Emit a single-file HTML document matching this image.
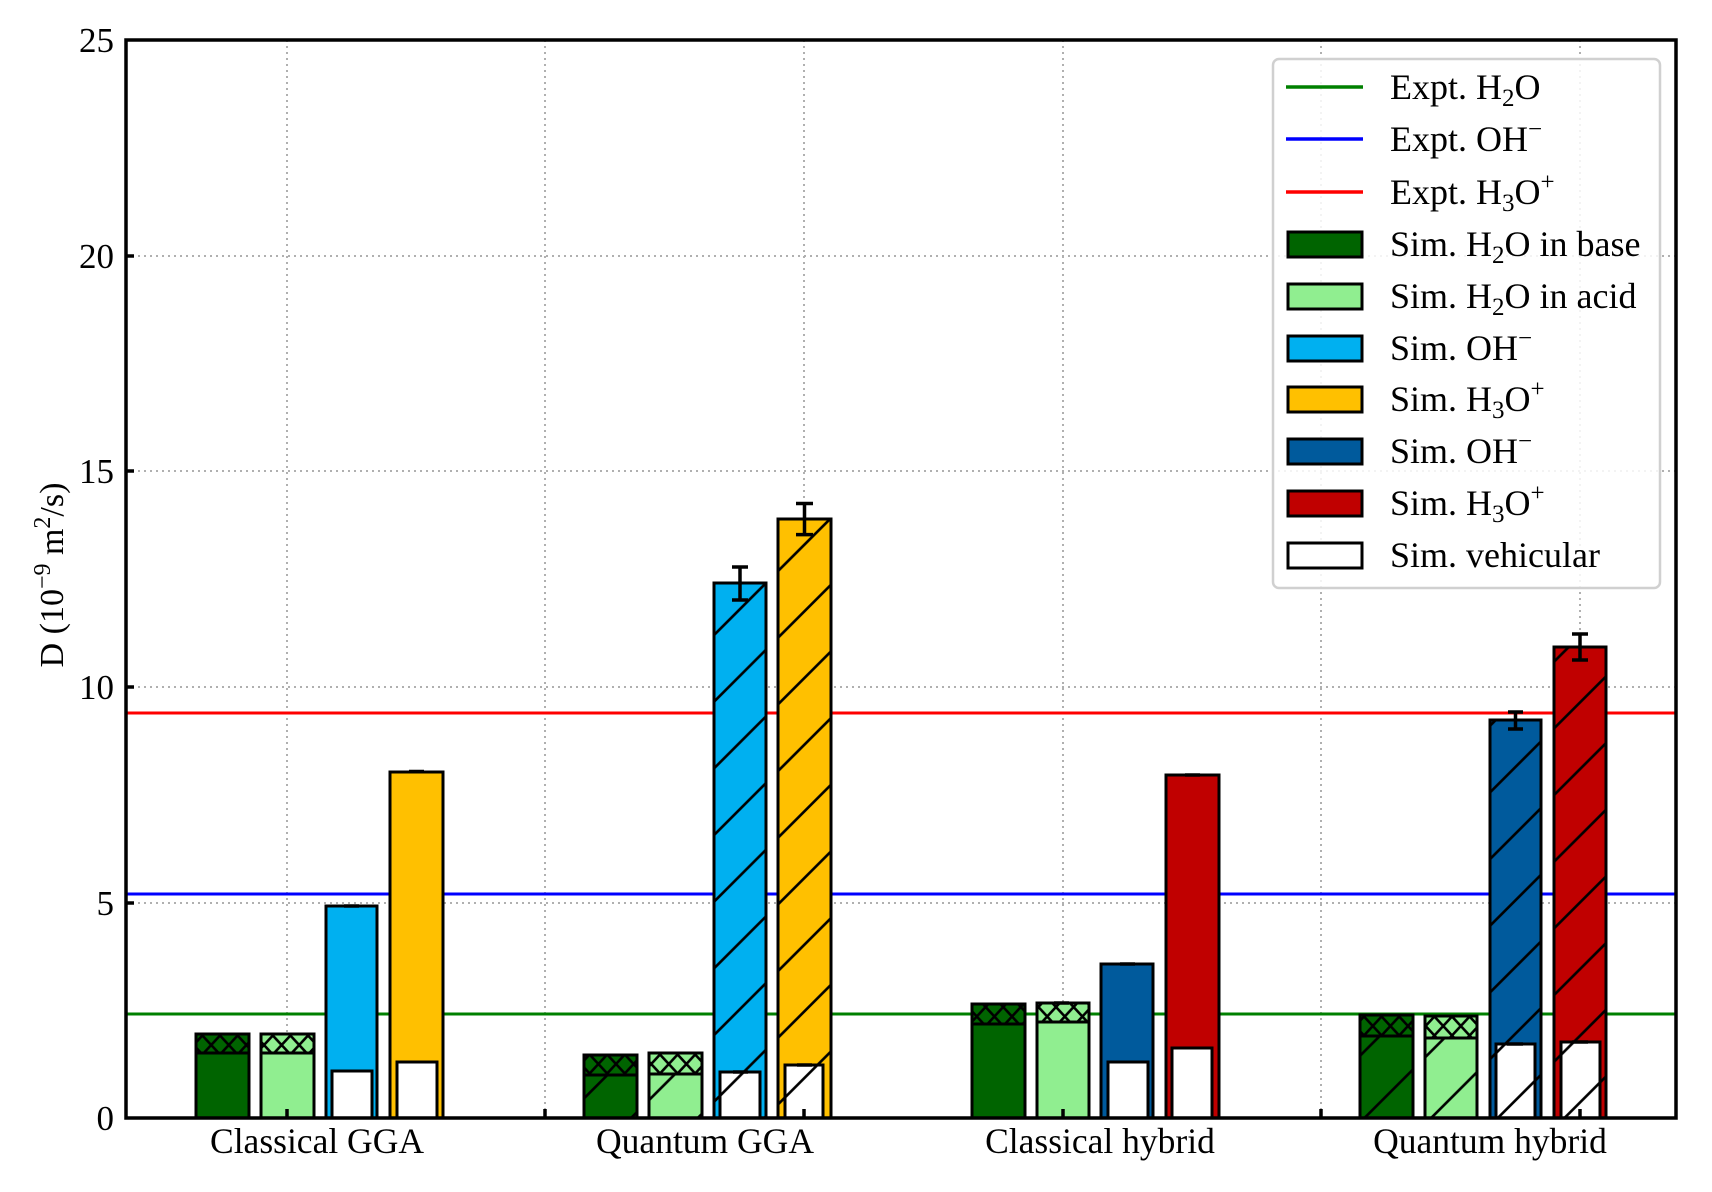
<!DOCTYPE html>
<html><head><meta charset="utf-8"><style>
html,body{margin:0;padding:0;background:#fff}
svg{display:block}
text{font-family:"Liberation Serif",serif;fill:#000}
</style></head><body>
<svg width="1712" height="1192" viewBox="0 0 1712 1192" xmlns="http://www.w3.org/2000/svg">
<defs>
<pattern id="hs" patternUnits="userSpaceOnUse" width="66.67" height="66.67">
<path d="M-2,17.67 L17.67,-2 M-2,84.33 L84.33,-2" stroke="#000" stroke-width="2.6"/>
</pattern>
<pattern id="hx" patternUnits="userSpaceOnUse" x="0" y="0" width="17.6" height="19">
<path d="M0,0 L17.6,19 M17.6,0 L0,19" stroke="#000" stroke-width="2.6"/>
</pattern>
</defs>
<rect width="1712" height="1192" fill="#fff"/>
<g stroke="#b0b0b0" stroke-width="2" stroke-dasharray="2,4">
<line x1="126" x2="1676" y1="903" y2="903"/>
<line x1="126" x2="1676" y1="687" y2="687"/>
<line x1="126" x2="1676" y1="471" y2="471"/>
<line x1="126" x2="1676" y1="256" y2="256"/>
<line x1="287" x2="287" y1="40" y2="1118"/>
<line x1="545" x2="545" y1="40" y2="1118"/>
<line x1="804" x2="804" y1="40" y2="1118"/>
<line x1="1063" x2="1063" y1="40" y2="1118"/>
<line x1="1321" x2="1321" y1="40" y2="1118"/>
<line x1="1580" x2="1580" y1="40" y2="1118"/>
</g>
<line x1="126" x2="1676" y1="1014" y2="1014" stroke="#008000" stroke-width="3"/>
<line x1="126" x2="1676" y1="894" y2="894" stroke="#0000ff" stroke-width="3"/>
<line x1="126" x2="1676" y1="713" y2="713" stroke="#ff0000" stroke-width="3"/>

<g stroke="#000" stroke-width="3">
<rect x="196" y="1034" width="53" height="84" fill="#006400"/>
<rect x="196" y="1034" width="53" height="19" fill="url(#hx)"/>
<line x1="196" x2="249" y1="1053" y2="1053"/>
<rect x="261" y="1034" width="53" height="84" fill="#90ee90"/>
<rect x="261" y="1034" width="53" height="19" fill="url(#hx)"/>
<line x1="261" x2="314" y1="1053" y2="1053"/>
<rect x="326" y="906" width="51" height="212" fill="#00b0f0"/>
<rect x="332" y="1071" width="40" height="47" fill="#fff"/>
<rect x="390" y="772" width="53" height="346" fill="#ffc000"/>
<rect x="397" y="1062" width="40" height="56" fill="#fff"/>
<rect x="584" y="1055" width="53" height="63" fill="#006400"/>
<rect x="584" y="1075" width="53" height="43" fill="url(#hs)" stroke="none"/>
<rect x="584" y="1055" width="53" height="20" fill="url(#hx)"/>
<rect x="584" y="1055" width="53" height="63" fill="none"/>
<rect x="649" y="1053" width="53" height="65" fill="#90ee90"/>
<rect x="649" y="1074" width="53" height="44" fill="url(#hs)" stroke="none"/>
<rect x="649" y="1053" width="53" height="21" fill="url(#hx)"/>
<rect x="649" y="1053" width="53" height="65" fill="none"/>
<rect x="714" y="583" width="52" height="535" fill="#00b0f0"/>
<rect x="714" y="583" width="52" height="535" fill="url(#hs)"/>
<rect x="720" y="1072" width="40" height="46" fill="#fff"/>
<rect x="720" y="1072" width="40" height="46" fill="url(#hs)"/>
<rect x="778" y="519" width="53" height="599" fill="#ffc000"/>
<rect x="778" y="519" width="53" height="599" fill="url(#hs)"/>
<rect x="785" y="1065" width="38" height="53" fill="#fff"/>
<rect x="785" y="1065" width="38" height="53" fill="url(#hs)"/>
<rect x="972" y="1004" width="53" height="114" fill="#006400"/>
<rect x="972" y="1004" width="53" height="20" fill="url(#hx)"/>
<rect x="1037" y="1003" width="52" height="115" fill="#90ee90"/>
<rect x="1037" y="1003" width="52" height="19" fill="url(#hx)"/>
<rect x="1101" y="964" width="52" height="154" fill="#005a9c"/>
<rect x="1108" y="1062" width="40" height="56" fill="#fff"/>
<rect x="1166" y="775" width="53" height="343" fill="#c00000"/>
<rect x="1172" y="1048" width="40" height="70" fill="#fff"/>
<rect x="1360" y="1015" width="53" height="103" fill="#006400"/>
<rect x="1360" y="1036" width="53" height="82" fill="url(#hs)" stroke="none"/>
<rect x="1360" y="1015" width="53" height="21" fill="url(#hx)"/>
<rect x="1360" y="1015" width="53" height="103" fill="none"/>
<rect x="1425" y="1016" width="52" height="102" fill="#90ee90"/>
<rect x="1425" y="1038" width="52" height="80" fill="url(#hs)" stroke="none"/>
<rect x="1425" y="1016" width="52" height="22" fill="url(#hx)"/>
<rect x="1425" y="1016" width="52" height="102" fill="none"/>
<rect x="1490" y="720" width="51" height="398" fill="#005a9c"/>
<rect x="1490" y="720" width="51" height="398" fill="url(#hs)"/>
<rect x="1496" y="1044" width="39" height="74" fill="#fff"/>
<rect x="1496" y="1044" width="39" height="74" fill="url(#hs)"/>
<rect x="1554" y="647" width="52" height="471" fill="#c00000"/>
<rect x="1554" y="647" width="52" height="471" fill="url(#hs)"/>
<rect x="1561" y="1042" width="39" height="76" fill="#fff"/>
<rect x="1561" y="1042" width="39" height="76" fill="url(#hs)"/>
</g>
<g stroke="#000" stroke-width="3.5">
<path d="M740,567V600M732,567H748M732,600H748"/>
<path d="M804.5,503.5V534.6M796,503.5H813M796,534.6H813"/>
<path d="M1515.5,712V729M1508,712H1523M1508,729H1523"/>
<path d="M1580,634V660M1572,634H1588M1572,660H1588"/>
<path d="M344,906H359M409,771.5H424M1120,964H1135M1185,775H1200"/>
<path d="M733,1072H748M797,1065H812M1507,1044H1523M1572,1042H1588M1054,1003H1069"/>
</g>
<rect x="126" y="40" width="1550" height="1078" fill="none" stroke="#000" stroke-width="3.5"/>
<g stroke="#000" stroke-width="3.5">
<path d="M126,903h8M126,687h8M126,471h8M126,256h8"/>
<path d="M287,1118v-9M545,1118v-9M804,1118v-9M1063,1118v-9M1321,1118v-9M1580,1118v-9"/>
</g>
<g font-size="35" text-anchor="end">
<text x="114" y="52">25</text>
<text x="114" y="268">20</text>
<text x="114" y="483">15</text>
<text x="114" y="699">10</text>
<text x="114" y="915">5</text>
<text x="114" y="1130">0</text>
</g>
<g font-size="35.5" text-anchor="middle">
<text x="317" y="1153">Classical GGA</text>
<text x="705" y="1153">Quantum GGA</text>
<text x="1100" y="1153">Classical hybrid</text>
<text x="1490" y="1153">Quantum hybrid</text>
</g>
<text font-size="34" text-anchor="middle" transform="translate(63,575) rotate(-90)">D (10<tspan dy="-13" font-size="24">−9</tspan><tspan dy="13"> m</tspan><tspan dy="-13" font-size="24">2</tspan><tspan dy="13">/s)</tspan></text>
<g transform="translate(-14,-1)">
<rect x="1287" y="60" width="387" height="529" rx="6" fill="#fff" fill-opacity="0.85" stroke="#d0d0d0" stroke-width="2.5"/>
<g stroke-width="3.5">
<line x1="1300" x2="1377" y1="88" y2="88" stroke="#008000"/>
<line x1="1300" x2="1377" y1="140" y2="140" stroke="#0000ff"/>
<line x1="1300" x2="1377" y1="193" y2="193" stroke="#ff0000"/>
</g>
<g stroke="#000" stroke-width="3">
<rect x="1302" y="233" width="74" height="25" fill="#006400"/>
<rect x="1302" y="285" width="74" height="25" fill="#90ee90"/>
<rect x="1302" y="337" width="74" height="25" fill="#00b0f0"/>
<rect x="1302" y="388" width="74" height="25" fill="#ffc000"/>
<rect x="1302" y="440" width="74" height="25" fill="#005a9c"/>
<rect x="1302" y="492" width="74" height="25" fill="#c00000"/>
<rect x="1302" y="544" width="74" height="25" fill="#fff"/>
</g>
<g font-size="36">
<text x="1404" y="100">Expt. H<tspan font-size="25" dy="7">2</tspan><tspan dy="-7">O</tspan></text>
<text x="1404" y="152">Expt. OH<tspan font-size="25" dy="-14">−</tspan></text>
<text x="1404" y="205">Expt. H<tspan font-size="25" dy="7">3</tspan><tspan dy="-7">O</tspan><tspan font-size="25" dy="-14">+</tspan></text>
<text x="1404" y="257">Sim. H<tspan font-size="25" dy="7">2</tspan><tspan dy="-7">O in base</tspan></text>
<text x="1404" y="309">Sim. H<tspan font-size="25" dy="7">2</tspan><tspan dy="-7">O in acid</tspan></text>
<text x="1404" y="361">Sim. OH<tspan font-size="25" dy="-14">−</tspan></text>
<text x="1404" y="412">Sim. H<tspan font-size="25" dy="7">3</tspan><tspan dy="-7">O</tspan><tspan font-size="25" dy="-14">+</tspan></text>
<text x="1404" y="464">Sim. OH<tspan font-size="25" dy="-14">−</tspan></text>
<text x="1404" y="516">Sim. H<tspan font-size="25" dy="7">3</tspan><tspan dy="-7">O</tspan><tspan font-size="25" dy="-14">+</tspan></text>
<text x="1404" y="568">Sim. vehicular</text>
</g>
</g>
</svg>
</body></html>
